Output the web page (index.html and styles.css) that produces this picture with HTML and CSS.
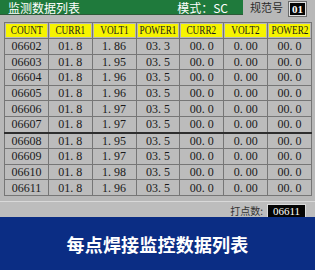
FILE: index.html
```html
<!DOCTYPE html>
<html lang="zh">
<head>
<meta charset="utf-8">
<link rel="stylesheet" href="styles.css">
</head>
<body>
<div class="screen">
  <div class="topbar">
    <div class="title-bar">
      <span class="title">监测数据列表</span>
      <span class="mode">模式：SC</span>
    </div>
    <div class="spec">
      <span class="spec-label">规范号</span>
      <span class="spec-box">01</span>
    </div>
  </div>
  <div class="table-wrap">
    <table class="data">
      <thead>
        <tr>
          <th><span>COUNT</span></th>
          <th><span>CURR1</span></th>
          <th><span>VOLT1</span></th>
          <th><span>POWER1</span></th>
          <th><span>CURR2</span></th>
          <th><span>VOLT2</span></th>
          <th><span>POWER2</span></th>
        </tr>
      </thead>
      <tbody>
        <tr><td>06602</td><td>01. 8</td><td>1. 86</td><td>03. 3</td><td>00. 0</td><td>0. 00</td><td>00. 0</td></tr>
        <tr><td>06603</td><td>01. 8</td><td>1. 95</td><td>03. 5</td><td>00. 0</td><td>0. 00</td><td>00. 0</td></tr>
        <tr><td>06604</td><td>01. 8</td><td>1. 96</td><td>03. 5</td><td>00. 0</td><td>0. 00</td><td>00. 0</td></tr>
        <tr><td>06605</td><td>01. 8</td><td>1. 96</td><td>03. 5</td><td>00. 0</td><td>0. 00</td><td>00. 0</td></tr>
        <tr><td>06606</td><td>01. 8</td><td>1. 97</td><td>03. 5</td><td>00. 0</td><td>0. 00</td><td>00. 0</td></tr>
        <tr><td>06607</td><td>01. 8</td><td>1. 97</td><td>03. 5</td><td>00. 0</td><td>0. 00</td><td>00. 0</td></tr>
        <tr class="split"><td>06608</td><td>01. 8</td><td>1. 95</td><td>03. 5</td><td>00. 0</td><td>0. 00</td><td>00. 0</td></tr>
        <tr><td>06609</td><td>01. 8</td><td>1. 97</td><td>03. 5</td><td>00. 0</td><td>0. 00</td><td>00. 0</td></tr>
        <tr><td>06610</td><td>01. 8</td><td>1. 98</td><td>03. 5</td><td>00. 0</td><td>0. 00</td><td>00. 0</td></tr>
        <tr><td>06611</td><td>01. 8</td><td>1. 96</td><td>03. 5</td><td>00. 0</td><td>0. 00</td><td>00. 0</td></tr>
      </tbody>
    </table>
  </div>
  <div class="footer">
    <span class="count-label">打点数:</span>
    <span class="count-box">06611</span>
  </div>
  <div class="banner">每点焊接监控数据列表</div>
</div>
</body>
</html>
```

FILE: styles.css
```css
html, body {
  margin: 0;
  padding: 0;
}
body {
  width: 315px;
  height: 270px;
  overflow: hidden;
  background: #b8b8b8;
}
.screen {
  width: 315px;
  height: 270px;
  display: flex;
  flex-direction: column;
  background: #b8b8b8;
}
.topbar {
  display: flex;
  flex: 0 0 15px;
  height: 15px;
}
.title-bar {
  width: 243px;
  background: #1f7a3c;
  display: flex;
  justify-content: space-between;
  align-items: center;
  box-sizing: border-box;
  padding: 0 15px 0 8px;
  color: #ffffff;
  font-family: "Noto Sans CJK SC", sans-serif;
  font-size: 12px;
  line-height: 15px;
  border-bottom: 1px solid #2c5a38;
}
.spec {
  flex: 1;
  display: flex;
  align-items: center;
  padding-left: 7px;
  gap: 6px;
}
.spec-label {
  font-family: "Noto Sans CJK SC", sans-serif;
  font-size: 11px;
  line-height: 15px;
  color: #2a2a2a;
}
.spec-box {
  display: inline-block;
  width: 15px;
  height: 12px;
  margin-top: 2px;
  background: #050505;
  color: #ffffff;
  border: 1px solid #e0e0e0;
  outline: 1px solid #6a6a6a;
  font-family: "Liberation Serif", serif;
  font-weight: 700;
  font-size: 11px;
  line-height: 12px;
  text-align: center;
}
.table-wrap {
  flex: 0 0 auto;
  padding: 7px 3px 0 4px;
}
.data {
  width: 308px;
  table-layout: fixed;
  border-collapse: collapse;
  font-family: "Liberation Serif", serif;
  font-size: 12px;
  color: #1a1a1a;
}
.data th,
.data td {
  border: 1px solid #767676;
  text-align: center;
  padding: 0;
  overflow: hidden;
  white-space: nowrap;
}
.data th {
  height: 15px;
  background: #f6f400;
  box-shadow: inset 0 0 0 1px #b8b8b8;
  font-weight: 400;
  color: #1a1a1a;
}
.data th span {
  display: inline-block;
  margin: 0 -7px;
  transform: scaleX(0.77);
  line-height: 14px;
}
.data td {
  height: 14.6px;
  line-height: 14px;
  background: #bcbcbc;
}
.data tr.split td {
  border-top: 2px solid #2e2e2e;
}
.footer {
  flex: 1 1 auto;
  min-height: 0;
  display: flex;
  justify-content: flex-end;
  align-items: flex-start;
  gap: 4px;
  margin-top: 5px;
  padding: 2px 9px 0 0;
  border-top: 1px solid #d9d9d9;
  background: #bdbdbd;
}
.count-label {
  font-family: "Noto Sans CJK SC", sans-serif;
  font-size: 10px;
  line-height: 13px;
  color: #333333;
}
.count-box {
  display: inline-block;
  width: 37px;
  height: 12px;
  background: #050505;
  color: #ffffff;
  border: 1px solid #dcdcdc;
  border-bottom: 0;
  font-family: "Liberation Serif", serif;
  font-size: 11px;
  line-height: 13px;
  text-align: center;
}
.banner {
  flex: 0 0 53px;
  background: #0b2d84;
  color: #ffffff;
  display: flex;
  align-items: center;
  justify-content: center;
  font-family: "Noto Sans CJK SC", sans-serif;
  font-weight: 700;
  font-size: 18px;
  letter-spacing: 0.2px;
}
```
